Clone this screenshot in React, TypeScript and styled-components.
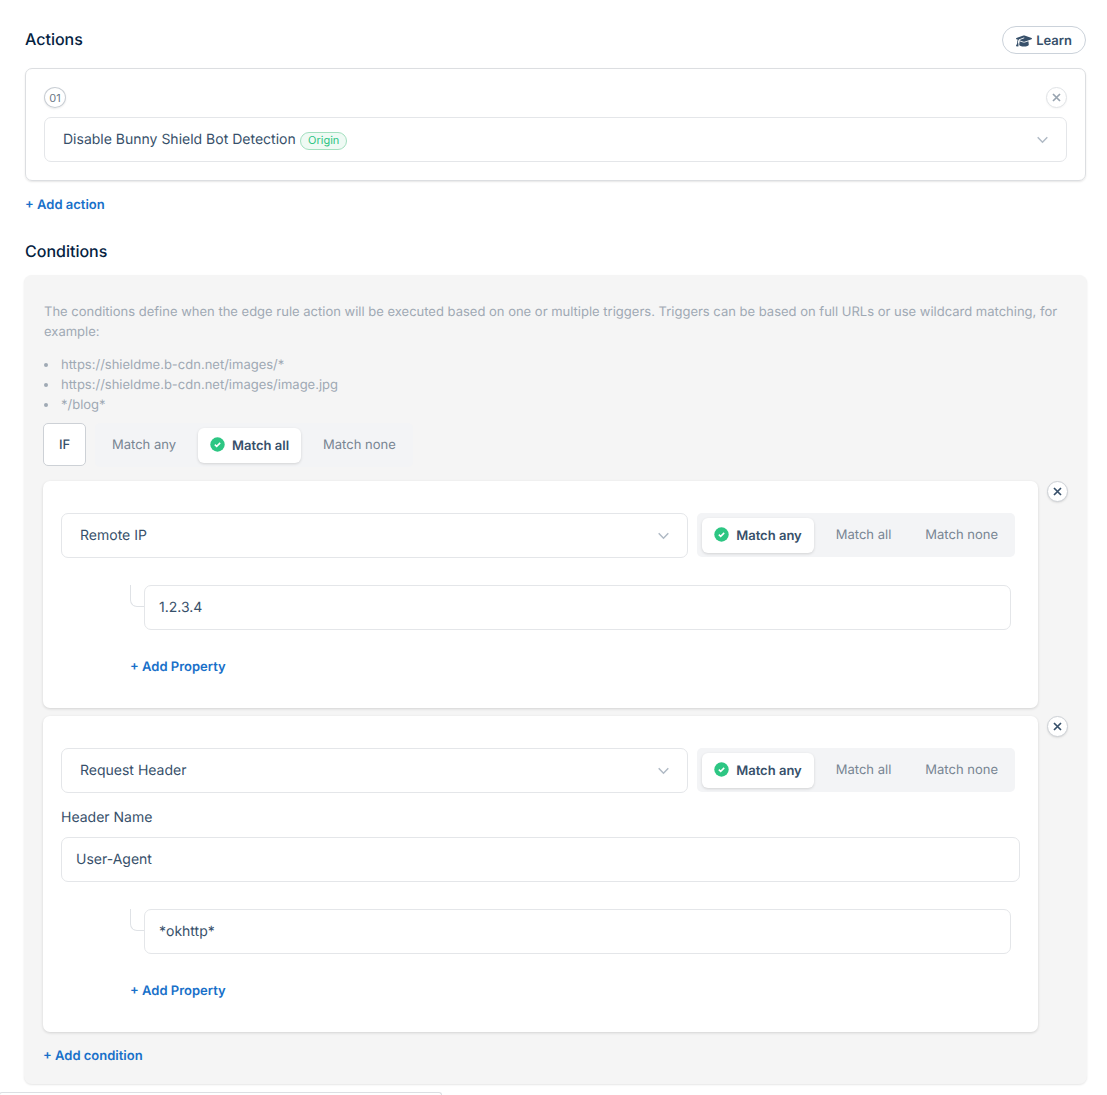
import React, { useId, useState } from "react";
import { FaGraduationCap } from "react-icons/fa6";
import styled, { createGlobalStyle } from "styled-components";

const GlobalStyle = createGlobalStyle`
  *, *::before, *::after { box-sizing: border-box; }
  body {
    margin: 0;
    background: #fff;
    color: #37506a;
    font-family: Inter, "Liberation Sans", sans-serif;
    font-size: 13px;
    line-height: 20px;
    text-rendering: geometricPrecision;
  }
  button, input, select { font: inherit; color: inherit; text-rendering: inherit; }
`;

const Page = styled.main`
  padding: 26px 21px 11px 25px;
`;

const Header = styled.header`
  display: flex;
  align-items: flex-start;
  justify-content: space-between;
  margin-bottom: 14px;
`;

const Heading = styled.h2`
  margin: 0;
  color: #04223f;
  font-size: 16px;
  font-weight: 500;
  line-height: 26px;
`;

const ConditionsHeading = styled(Heading)`
  margin: 23px 0 11px;
`;

const LearnButton = styled.button`
  display: flex;
  align-items: center;
  gap: 4px;
  height: 28px;
  padding: 1px 13px 0;
  border: 1px solid #cbd2da;
  border-radius: 14px;
  background: #fff;
  font-weight: 600;
  cursor: pointer;
`;

const ActionCard = styled.section`
  padding: 18px;
  border: 1px solid #dcdee1;
  border-radius: 7px;
  box-shadow: 0 1px 2px rgba(0, 0, 0, 0.1);
`;

const ActionTop = styled.div`
  display: flex;
  align-items: flex-start;
  justify-content: space-between;
  margin-bottom: 9px;
`;

const NumberBadge = styled.span`
  display: flex;
  align-items: center;
  justify-content: center;
  width: 22px;
  height: 21px;
  border: 1px solid #c9ced4;
  border-radius: 50%;
  box-shadow: 0 1px 2px rgba(0, 0, 0, 0.08);
  color: #6b7785;
  font-size: 11px;
`;

const CloseButton = styled.button<{ $muted?: boolean }>`
  display: flex;
  flex: none;
  align-items: center;
  justify-content: center;
  width: 21px;
  height: 21px;
  padding: 0;
  border: 1px solid ${(p) => (p.$muted ? "#e0e3e6" : "#cdd1d6")};
  border-radius: 50%;
  background: #fff;
  box-shadow: 0 1px 2px rgba(0, 0, 0, ${(p) => (p.$muted ? 0.04 : 0.1)});
  color: ${(p) => (p.$muted ? "#98a4b0" : "#37506a")};
  cursor: pointer;
`;

const SelectWrap = styled.div`
  position: relative;
  display: flex;
  flex: 1;
  min-width: 0;
  align-items: center;
`;

const SelectControl = styled.select`
  appearance: none;
  width: 100%;
  height: 45px;
  padding: 0 44px 0 18px;
  border: 1px solid #e4e6e9;
  border-radius: 7px;
  background: #fff;
  font-size: 14px;
  cursor: pointer;
`;

const SelectArrow = styled.svg`
  position: absolute;
  right: 19px;
  pointer-events: none;
`;

const OriginBadge = styled.span`
  position: absolute;
  top: 15px;
  left: 256px;
  height: 18px;
  padding: 0 7px;
  border: 1px solid #a3dfbf;
  border-radius: 9px;
  background: #effaf4;
  color: #2dc483;
  font-size: 11px;
  line-height: 15px;
  pointer-events: none;
`;

const AddButton = styled.button`
  display: block;
  padding: 0;
  border: 0;
  background: none;
  color: #1870c9;
  font-weight: 600;
  cursor: pointer;
`;

const AddAction = styled(AddButton)`
  margin-top: 14px;
`;

const ConditionsBox = styled.section`
  margin: 0 -1px;
  padding: 27px 19px 18px;
  border-radius: 8px;
  background: #f5f5f5;
  box-shadow: 0 1px 2px rgba(0, 0, 0, 0.1);
`;

const Help = styled.div`
  padding-left: 1px;
  margin-bottom: 8px;
  color: #9fa9b4;
`;

const HelpText = styled.p`
  margin: 0 0 13px;
`;

const Examples = styled.ul`
  margin: 0;
  padding: 0;
  list-style: none;
`;

const Example = styled.li`
  display: flex;
  align-items: center;
  gap: 13px;

  &::before {
    content: "";
    width: 4px;
    height: 4px;
    border-radius: 50%;
    background: currentColor;
  }
`;

const MatchRow = styled.div`
  display: flex;
  align-items: flex-start;
  gap: 9px;
  margin-bottom: 14px;
`;

const IfBox = styled.span`
  display: flex;
  align-items: center;
  justify-content: center;
  width: 43px;
  height: 43px;
  border: 1px solid #cdd1d6;
  border-radius: 5px;
  background: #fff;
  font-weight: 500;
`;

const ToggleGroup = styled.div`
  display: flex;
  flex: none;
  align-items: center;
  height: 44px;
  border-radius: 5px;
  background: #f3f4f6;
`;

const ToggleOption = styled.label<{ $active: boolean }>`
  display: flex;
  align-items: center;
  gap: 7px;
  height: 35px;
  margin: ${(p) => (p.$active ? "0 5px" : "0")};
  padding: ${(p) => (p.$active ? "1px 12px 0" : "0 17px")};
  border-radius: 6px;
  background: ${(p) => (p.$active ? "#fff" : "transparent")};
  box-shadow: ${(p) => (p.$active ? "0 1px 3px rgba(0, 0, 0, 0.14)" : "none")};
  color: ${(p) => (p.$active ? "#37506a" : "#778492")};
  font-weight: ${(p) => (p.$active ? 600 : 400)};
  white-space: nowrap;
  cursor: pointer;
`;

const HiddenRadio = styled.input`
  position: absolute;
  width: 1px;
  height: 1px;
  margin: 0;
  opacity: 0;
`;

const CheckMark = styled.svg`
  margin-bottom: 3px;
`;

const ConditionList = styled.div`
  display: flex;
  flex-direction: column;
  gap: 8px;
  margin-bottom: 14px;
`;

const ConditionRow = styled.div`
  display: flex;
  align-items: flex-start;
  gap: 9px;
`;

const ConditionCard = styled.article`
  flex: 1;
  min-width: 0;
  padding: 32px 18px 31px;
  border-radius: 7px;
  background: #fff;
  box-shadow: 0 1px 3px rgba(0, 0, 0, 0.14);
`;

const TriggerRow = styled.div`
  display: flex;
  gap: 9px;
  padding-right: 5px;
`;

const FieldLabel = styled.label`
  display: block;
  margin: 15px 0 9px;
  font-size: 14px;
`;

const TextInput = styled.input`
  display: block;
  width: 100%;
  height: 45px;
  padding: 0 14px;
  border: 1px solid #e4e6e9;
  border-radius: 7px;
  background: #fff;
  font-size: 14px;
`;

const PropertyBlock = styled.div`
  padding: 27px 9px 0 69px;
`;

const PropertyRow = styled.div`
  display: flex;
  margin-bottom: 27px;
`;

const Connector = styled.span`
  flex: none;
  width: 14px;
  height: 22px;
  border: solid #dfe2e6;
  border-width: 0 0 1px 1px;
  border-bottom-left-radius: 7px;
`;

const StatusPanel = styled.div`
  position: fixed;
  bottom: 0;
  left: -1px;
  width: 40%;
  height: 3px;
  border: 1px solid #dcdfe3;
  border-bottom: 0;
  border-radius: 6px 6px 0 0;
  background: #fff;
`;

const CheckIcon = () => (
  <CheckMark width="15" height="15" viewBox="0 0 15 15" aria-hidden="true">
    <circle cx="7.500" cy="7.500" r="7.200" fill="#2dc683" />
    <path d="m4.800 7.600 1.900 1.800 3.500-3.500" fill="none" stroke="#fff" strokeWidth="1.500" />
  </CheckMark>
);

const CrossIcon = () => (
  <svg width="9" height="9" viewBox="0 0 9 9" aria-hidden="true">
    <path d="m1 1 7 7M8 1 1 8" fill="none" stroke="currentColor" strokeWidth="1.700" />
  </svg>
);

const Chevron = () => (
  <SelectArrow width="11" height="8" viewBox="0 0 11 8" aria-hidden="true">
    <path d="m.7 1.300 4.800 4.900 4.800-4.900" fill="none" stroke="#b0bac5" strokeWidth="1.500" />
  </SelectArrow>
);

const MATCH_OPTIONS = ["Match any", "Match all", "Match none"];

function MatchToggle({ initial, label }: { initial: string; label: string }) {
  const name = useId();
  const [value, setValue] = useState(initial);
  return (
    <ToggleGroup role="radiogroup" aria-label={label}>
      {MATCH_OPTIONS.map((option) => (
        <ToggleOption key={option} $active={option === value}>
          <HiddenRadio
            type="radio"
            name={name}
            checked={option === value}
            onChange={() => setValue(option)}
          />
          {option === value && <CheckIcon />}
          {option}
        </ToggleOption>
      ))}
    </ToggleGroup>
  );
}

interface ConditionProps {
  trigger: string;
  property: string;
  headerName?: string;
}

function Condition({ trigger, property, headerName }: ConditionProps) {
  const id = useId();
  return (
    <ConditionRow>
      <ConditionCard>
        <TriggerRow>
          <SelectWrap>
            <SelectControl aria-label="Trigger" defaultValue={trigger}>
              <option>Remote IP</option>
              <option>Request Header</option>
            </SelectControl>
            <Chevron />
          </SelectWrap>
          <MatchToggle initial="Match any" label={`${trigger} matching`} />
        </TriggerRow>
        {headerName && (
          <>
            <FieldLabel htmlFor={id}>Header Name</FieldLabel>
            <TextInput id={id} defaultValue={headerName} />
          </>
        )}
        <PropertyBlock>
          <PropertyRow>
            <Connector />
            <TextInput aria-label={`${trigger} value`} defaultValue={property} />
          </PropertyRow>
          <AddButton type="button">+ Add Property</AddButton>
        </PropertyBlock>
      </ConditionCard>
      <CloseButton type="button" aria-label={`Remove ${trigger} condition`}>
        <CrossIcon />
      </CloseButton>
    </ConditionRow>
  );
}

export default function App() {
  return (
    <>
      <GlobalStyle />
      <Page>
        <Header>
          <Heading>Actions</Heading>
          <LearnButton type="button">
            <FaGraduationCap size={16} aria-hidden="true" />
            Learn
          </LearnButton>
        </Header>
        <ActionCard>
          <ActionTop>
            <NumberBadge>01</NumberBadge>
            <CloseButton type="button" $muted aria-label="Remove action">
              <CrossIcon />
            </CloseButton>
          </ActionTop>
          <SelectWrap>
            <SelectControl aria-label="Action">
              <option>Disable Bunny Shield Bot Detection</option>
            </SelectControl>
            <OriginBadge>Origin</OriginBadge>
            <Chevron />
          </SelectWrap>
        </ActionCard>
        <AddAction type="button">+ Add action</AddAction>

        <ConditionsHeading>Conditions</ConditionsHeading>
        <ConditionsBox>
          <Help>
            <HelpText>
              The conditions define when the edge rule action will be executed based on one or
              multiple triggers. Triggers can be based on full URLs or use wildcard matching, for
              example:
            </HelpText>
            <Examples>
              <Example>https://shieldme.b-cdn.net/images/*</Example>
              <Example>https://shieldme.b-cdn.net/images/image.jpg</Example>
              <Example>*/blog*</Example>
            </Examples>
          </Help>
          <MatchRow>
            <IfBox>IF</IfBox>
            <MatchToggle initial="Match all" label="Condition matching" />
          </MatchRow>
          <ConditionList>
            <Condition trigger="Remote IP" property="1.2.3.4" />
            <Condition trigger="Request Header" headerName="User-Agent" property="*okhttp*" />
          </ConditionList>
          <AddButton type="button">+ Add condition</AddButton>
        </ConditionsBox>
      </Page>
      <StatusPanel />
    </>
  );
}
